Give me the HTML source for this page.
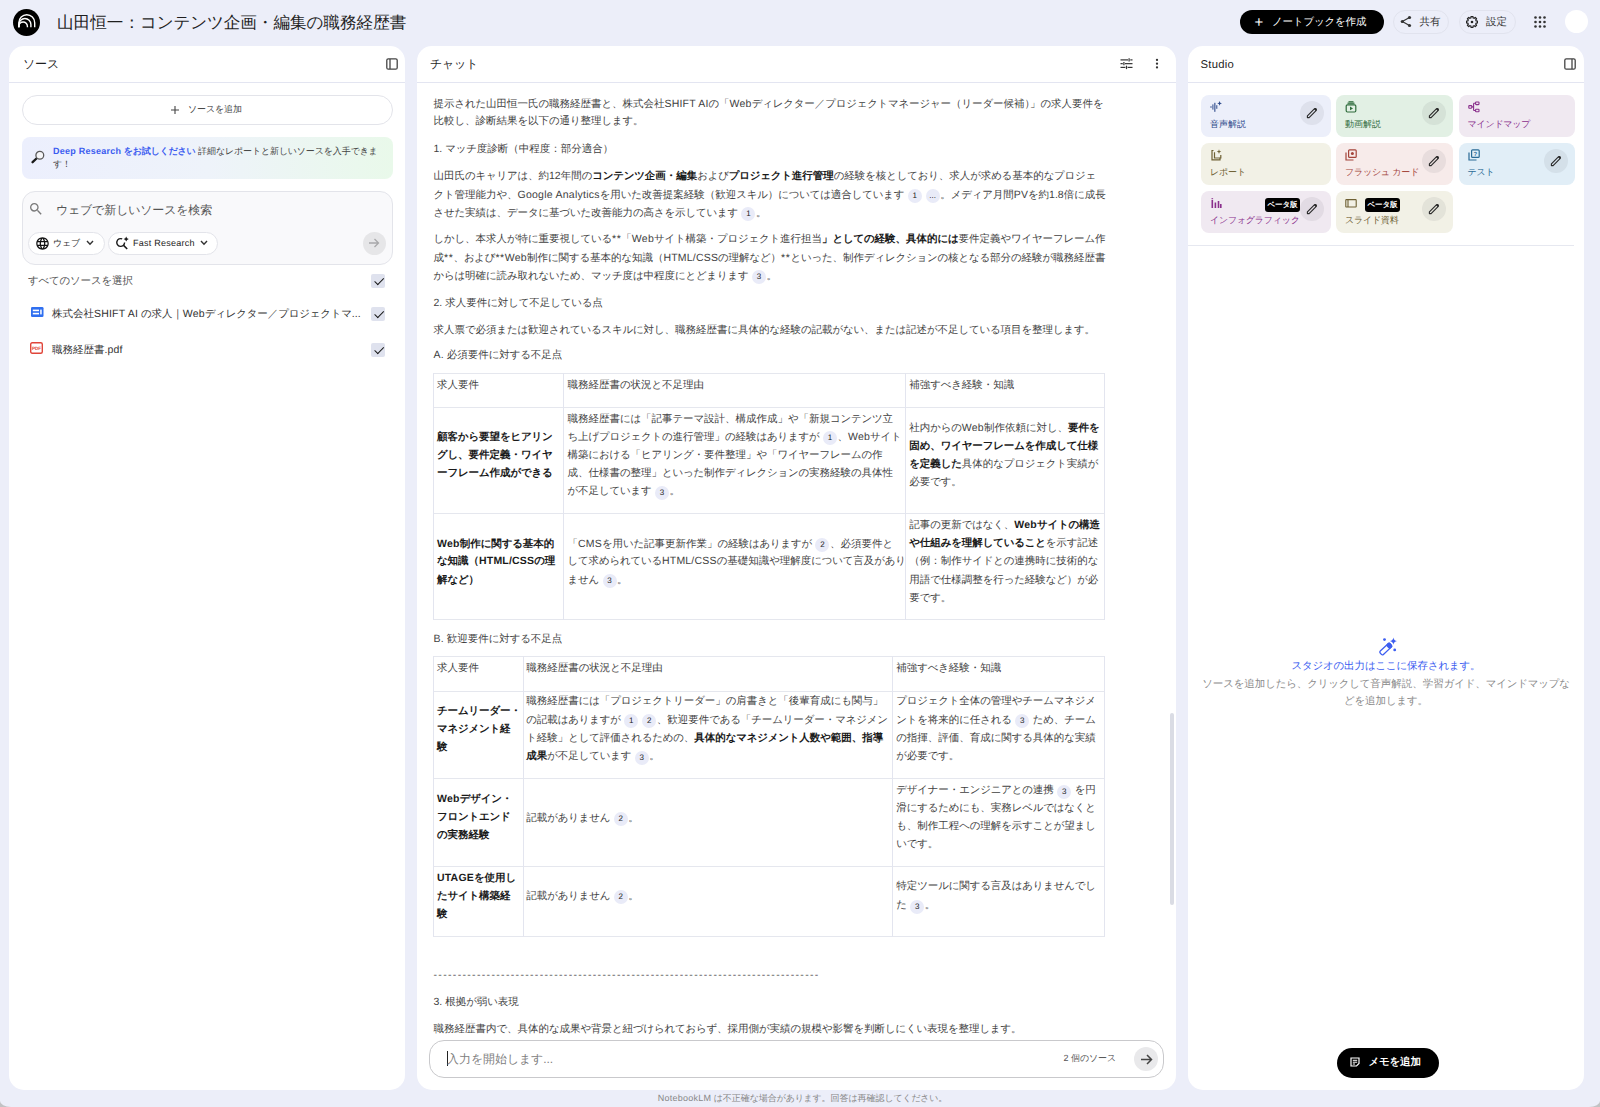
<!DOCTYPE html>
<html lang="ja">
<head>
<meta charset="utf-8">
<style>
*{box-sizing:border-box;margin:0;padding:0}
html,body{width:1600px;height:1107px;overflow:hidden}
body{text-rendering:geometricPrecision;background:#c2c2c4;font-family:"Liberation Sans",sans-serif;color:#3a3a3a;position:relative;font-size:10.5px}
.abs{position:absolute}
.panel{position:absolute;top:46px;height:1044px;background:#fff;border-radius:15px;overflow:hidden}
.ph{position:absolute;left:0;right:0;top:0;height:37px;border-bottom:1px solid #e3e5f1}
.ptitle{position:absolute;top:56px;font-size:12px;line-height:16px;color:#1f1f1f}
.ln{position:absolute;white-space:nowrap;line-height:18px;height:18px;font-size:10.5px;color:#3f3f3f}
b{font-weight:bold;color:#1a1a1a}
.c{display:inline-block;width:14px;height:14px;border-radius:7px;background:#e9ebf8;color:#222;font-size:8px;line-height:14px;text-align:center;vertical-align:-0.5px;margin:0 0.5px 0 3.5px;font-weight:normal}
.chk{width:14px;height:13.5px;border-radius:2px;background:#dfe2ee}
.chk::after{content:"";position:absolute;left:2.6px;top:2.2px;width:8.4px;height:4.2px;border-left:1.8px solid #1a1a1a;border-bottom:1.8px solid #1a1a1a;transform:rotate(-45deg) translate(-0.6px,1.6px)}
.tile{position:absolute;height:42px;border-radius:8px}
.ticon{position:absolute;left:9px;top:6px;width:12px;height:12px}
.ticon svg{display:block}
.tlabel{position:absolute;left:9px;top:23px;font-size:9px;line-height:13px;white-space:nowrap}
.pen{position:absolute;right:6.5px;top:5.5px;width:24px;height:24px;border-radius:50%;background:rgba(40,40,60,0.07)}
.pen svg{position:absolute;left:6px;top:6px}
.beta{position:absolute;top:6.5px;height:14px;width:35px;border-radius:3px;background:#000;color:#fff;font-size:7.5px;line-height:14px;text-align:center;font-weight:bold}
.tbl{position:absolute;border:1px solid #dfe2ec}
.hl{position:absolute;height:1px;background:#e5e7ee}
.vl{position:absolute;width:1px;background:#e3e5ef}
i.k{font-style:normal;letter-spacing:var(--ks,-0.25px)}
i.l{font-style:normal;letter-spacing:var(--ls,0.25px)}
i.u{font-style:normal;letter-spacing:var(--us,0.2px)}
i.a{font-style:normal;letter-spacing:0.6px}
i.h{font-style:normal;letter-spacing:-5px}
</style>
</head>
<body>
<div class="abs" style="left:0;top:0;width:1600px;height:1107px;background:#eceef9;border-radius:0 0 11px 11px / 0 0 6px 6px"></div>
<!-- top bar -->
<svg class="abs" style="left:13px;top:8.5px" width="27" height="27" viewBox="0 0 27 27">
<circle cx="13.5" cy="13.5" r="13.5" fill="#000"/>
<g fill="none" stroke="#fff" stroke-width="1.4">
<path d="M5.9 18.3 V13.7 A7.9 7.9 0 0 1 21.7 13.7 V18.3"/>
<path d="M5.9 18.3 V15.5 A6 6 0 0 1 17.9 15.5 V18.3"/>
<path d="M5.9 18.3 V17.2 A4.25 4.25 0 0 1 14.4 17.2 V18.3"/>
</g>
</svg>
<div class="abs" style="left:57px;top:11.5px;font-size:16.6px;line-height:21px;color:#1f1f1f;white-space:nowrap">山田恒一：<i class="k">コンテンツ</i>企画・編集<i class="k">の</i>職務経歴書</div>

<div class="abs" style="left:1240px;top:9.5px;width:144px;height:24px;border-radius:12px;background:#000;color:#fff;font-size:10.5px;line-height:24px;white-space:nowrap">
<span class="abs" style="left:14.5px;top:1.5px;font-size:15px;">+</span><span class="abs" style="left:32px;top:0;font-weight:normal"><i class="k">ノ</i>ー<i class="k">トブックを</i>作成</span></div>

<div class="abs" style="left:1393px;top:9.5px;width:56px;height:24px;border-radius:12px;border:1px solid #e1e3ee;"></div>
<svg class="abs" style="left:1400px;top:15px" width="12" height="13" viewBox="0 0 12 13"><g fill="#333"><circle cx="9.5" cy="2.5" r="1.6"/><circle cx="2.3" cy="6.5" r="1.6"/><circle cx="9.5" cy="10.5" r="1.6"/></g><path d="M9.5 2.5 L2.3 6.5 L9.5 10.5" stroke="#333" stroke-width="1.2" fill="none"/></svg>
<div class="abs" style="left:1419.5px;top:14.75px;font-size:10.5px;line-height:14px;color:#333">共有</div>

<div class="abs" style="left:1459px;top:9.5px;width:57px;height:24px;border-radius:12px;border:1px solid #e1e3ee;"></div>
<svg class="abs" style="left:1466px;top:16px" width="12" height="12" viewBox="0 0 12 12"><path d="M11.52 5.08 L11.52 6.92 L10.17 7.04 L9.68 8.22 L10.56 9.26 L9.26 10.56 L8.22 9.68 L7.04 10.17 L6.92 11.52 L5.08 11.52 L4.96 10.17 L3.78 9.68 L2.74 10.56 L1.44 9.26 L2.32 8.22 L1.83 7.04 L0.48 6.92 L0.48 5.08 L1.83 4.96 L2.32 3.78 L1.44 2.74 L2.74 1.44 L3.78 2.32 L4.96 1.83 L5.08 0.48 L6.92 0.48 L7.04 1.83 L8.22 2.32 L9.26 1.44 L10.56 2.74 L9.68 3.78 L10.17 4.96Z" fill="none" stroke="#222" stroke-width="1.2" stroke-linejoin="round"/><circle cx="6" cy="6" r="1.3" fill="#222"/></svg>
<div class="abs" style="left:1486px;top:14.75px;font-size:10.5px;line-height:14px;color:#333">設定</div>

<svg class="abs" style="left:1534px;top:16px" width="12" height="12" viewBox="0 0 12 12"><g fill="#333"><circle cx="1.5" cy="1.5" r="1.3"/><circle cx="6" cy="1.5" r="1.3"/><circle cx="10.5" cy="1.5" r="1.3"/><circle cx="1.5" cy="6" r="1.3"/><circle cx="6" cy="6" r="1.3"/><circle cx="10.5" cy="6" r="1.3"/><circle cx="1.5" cy="10.5" r="1.3"/><circle cx="6" cy="10.5" r="1.3"/><circle cx="10.5" cy="10.5" r="1.3"/></g></svg>
<div class="abs" style="left:1565px;top:10px;width:23px;height:23px;border-radius:50%;background:#fff"></div>

<!-- LEFT PANEL -->
<div class="panel" style="left:9px;width:396px">
  <div class="ph"></div>
</div>
<div class="ptitle" style="left:23px"><i class="k">ソ</i>ー<i class="k">ス</i></div>
<svg class="abs" style="left:386px;top:58px" width="12" height="12" viewBox="0 0 12 12"><rect x="0.8" y="0.8" width="10.4" height="10.4" rx="1.5" fill="none" stroke="#444" stroke-width="1.3"/><line x1="4" y1="1" x2="4" y2="11" stroke="#444" stroke-width="1.3"/></svg>
<div class="abs" style="left:22px;top:95px;width:371px;height:29.5px;border:1px solid #e3e4ea;border-radius:15px"></div>
<svg class="abs" style="left:170.5px;top:105.5px" width="8" height="8" viewBox="0 0 8 8"><path d="M4 0 V8 M0 4 H8" stroke="#444" stroke-width="1.1"/></svg>
<div class="abs" style="left:188px;top:102px;font-size:9px;line-height:14px;color:#444"><i class="k">ソ</i>ー<i class="k">スを</i>追加</div>
<div class="abs" style="left:22px;top:137px;width:371px;height:42px;border-radius:8px;background:linear-gradient(90deg,#eceffd 0%,#eef3fa 50%,#e9f9ea 100%)"></div>
<svg class="abs" style="left:30.5px;top:149.5px" width="14" height="14" viewBox="0 0 14 14"><line x1="6" y1="8" x2="1.6" y2="12.2" stroke="#1a1a1a" stroke-width="2.3" stroke-linecap="round"/><circle cx="8.8" cy="5.2" r="3.9" fill="#f6f6f8" stroke="#5a5a5a" stroke-width="1.3"/></svg>
<div class="abs" style="left:53px;top:145px;font-size:9px;line-height:12.5px;color:#444;width:330px"><span style="color:#3b5cf0;font-weight:bold"><i class="l">Deep Research</i> <i class="k">をお</i>試<i class="k">しください</i></span> 詳細<i class="k">なレポ</i>ー<i class="k">トと</i>新<i class="k">しいソ</i>ー<i class="k">スを</i>入手<i class="k">できま</i><br><i class="k">す</i>！</div>
<div class="abs" style="left:22px;top:191.3px;width:371px;height:74px;border:1px solid #e3e4ea;border-radius:13px;background:#f9f9fb"></div>
<svg class="abs" style="left:27.5px;top:200.5px" width="16" height="16" viewBox="0 0 24 24"><path fill="#7a7a7a" d="M15.5 14h-.79l-.28-.27A6.47 6.47 0 0 0 16 9.5 6.5 6.5 0 1 0 9.5 16c1.61 0 3.09-.59 4.23-1.57l.27.28v.79l5 4.99L20.49 19l-4.99-5zm-6 0C7.01 14 5 11.99 5 9.5S7.01 5 9.5 5 14 7.01 14 9.5 11.99 14 9.5 14z"/></svg>
<div class="abs" style="left:56px;top:202px;font-size:12px;line-height:16px;color:#555"><i class="k">ウェブで</i>新<i class="k">しいソ</i>ー<i class="k">スを</i>検索</div>
<div class="abs" style="left:28px;top:232px;width:77px;height:23px;border:1px solid #e3e4ea;border-radius:12px;background:#fff"></div>
<svg class="abs" style="left:35px;top:236px" width="15" height="15" viewBox="0 0 24 24"><path fill="#111" d="M11.99 2C6.47 2 2 6.48 2 12s4.47 10 9.99 10C17.52 22 22 17.52 22 12S17.52 2 11.99 2zm6.93 6h-2.95a15.65 15.65 0 0 0-1.38-3.56A8.03 8.03 0 0 1 18.92 8zM12 4.04c.83 1.2 1.48 2.53 1.91 3.96h-3.82c.43-1.43 1.08-2.76 1.91-3.96zM4.26 14C4.1 13.36 4 12.69 4 12s.1-1.36.26-2h3.38c-.08.66-.14 1.32-.14 2s.06 1.34.14 2H4.26zm.82 2h2.95c.32 1.25.78 2.45 1.38 3.56A7.99 7.99 0 0 1 5.08 16zm2.95-8H5.08a7.99 7.99 0 0 1 4.33-3.56A15.65 15.65 0 0 0 8.03 8zM12 19.96c-.83-1.2-1.48-2.53-1.91-3.96h3.82c-.43 1.43-1.08 2.76-1.91 3.96zM14.34 14H9.66c-.09-.66-.16-1.32-.16-2s.07-1.35.16-2h4.68c.09.65.16 1.32.16 2s-.07 1.34-.16 2zm.25 5.56c.6-1.11 1.06-2.31 1.38-3.56h2.95a8.03 8.03 0 0 1-4.33 3.56zM16.36 14c.08-.66.14-1.32.14-2s-.06-1.34-.14-2h3.38c.16.64.26 1.31.26 2s-.1 1.36-.26 2h-3.38z"/></svg>
<div class="abs" style="left:53px;top:236px;font-size:9px;line-height:14px;color:#333"><i class="k">ウェブ</i></div>
<svg class="abs" style="left:86px;top:240px" width="8" height="6" viewBox="0 0 8 6"><path d="M1 1 L4 4.2 L7 1" fill="none" stroke="#333" stroke-width="1.4"/></svg>
<div class="abs" style="left:108px;top:232px;width:110px;height:23px;border:1px solid #e3e4ea;border-radius:12px;background:#fff"></div>
<svg class="abs" style="left:116px;top:235.5px" width="14" height="14" viewBox="0 0 14 14"><path d="M8.6 6.6 A3.9 3.9 0 1 1 6.2 2.9" fill="none" stroke="#1a1a1a" stroke-width="1.4"/><line x1="7.6" y1="9.4" x2="11.2" y2="13" stroke="#1a1a1a" stroke-width="1.5"/><path d="M10.2 0.6 Q10.6 2.6 12.8 3.1 Q10.6 3.6 10.2 5.6 Q9.8 3.6 7.6 3.1 Q9.8 2.6 10.2 0.6Z" fill="#1a1a1a"/></svg>
<div class="abs" style="left:133px;top:236px;font-size:9px;line-height:14px;color:#222"><i class="l">Fast Research</i></div>
<svg class="abs" style="left:200px;top:240px" width="8" height="6" viewBox="0 0 8 6"><path d="M1 1 L4 4.2 L7 1" fill="none" stroke="#333" stroke-width="1.4"/></svg>
<div class="abs" style="left:363px;top:231.5px;width:23px;height:23px;border-radius:50%;background:#e6e6e8"></div>
<svg class="abs" style="left:368px;top:237px" width="12" height="12" viewBox="0 0 12 12"><path d="M1 6 H10.5 M6.5 2 L10.5 6 L6.5 10" fill="none" stroke="#a8a8aa" stroke-width="1.3"/></svg>
<div class="abs" style="left:28px;top:273.5px;font-size:10.5px;line-height:14px;color:#555"><i class="k">すべてのソ</i>ー<i class="k">スを</i>選択</div>
<div class="chk abs" style="left:371px;top:274px"></div>
<svg class="abs" style="left:30.5px;top:306.5px" width="13" height="11" viewBox="0 0 13 11"><rect x="0" y="0" width="12.5" height="10" rx="1.3" fill="#2f6ff0"/><rect x="1.8" y="2.6" width="6.2" height="1.6" fill="#fff"/><rect x="1.8" y="5.8" width="6.2" height="1.6" fill="#fff"/><rect x="9.2" y="2.6" width="1.5" height="4.8" fill="#fff"/></svg>
<div class="abs" style="left:52px;top:307px;font-size:10.5px;line-height:14px;color:#333;white-space:nowrap">株式会社<i class="u">SHIFT AI</i> <i class="k">の</i>求人｜<i class="l">Web</i><i class="k">ディレクタ</i>ー／<i class="k">プロジェクトマ</i>...</div>
<div class="chk abs" style="left:371px;top:307px"></div>
<svg class="abs" style="left:30px;top:342px" width="13" height="12" viewBox="0 0 13 12"><rect x="0.7" y="0.7" width="11.6" height="10.6" rx="1.5" fill="none" stroke="#e0453a" stroke-width="1.4"/><text x="6.5" y="7.6" font-size="4.6" font-family="Liberation Sans" font-weight="bold" fill="#e0453a" text-anchor="middle">PDF</text></svg>
<div class="abs" style="left:52px;top:343px;font-size:10.5px;line-height:14px;color:#333;white-space:nowrap">職務経歴書.<i class="l">pdf</i></div>
<div class="chk abs" style="left:371px;top:343px"></div>

<!-- MIDDLE PANEL -->
<div class="panel" style="left:417px;width:759px">
  <div class="ph"></div>
</div>
<!--MID-->
<div class="ptitle" style="left:430px"><i class="k">チャット</i></div>
<svg class="abs" style="left:1120px;top:58px" width="13" height="12" viewBox="0 0 13 12"><g stroke="#333" stroke-width="1.2"><line x1="0.5" y1="1.9" x2="8" y2="1.9"/><line x1="10.3" y1="1.9" x2="12.5" y2="1.9"/><line x1="9.1" y1="0.2" x2="9.1" y2="3.6"/><line x1="0.5" y1="5.65" x2="2.8" y2="5.65"/><line x1="5" y1="5.65" x2="12.5" y2="5.65"/><line x1="3.9" y1="3.95" x2="3.9" y2="7.35"/><line x1="0.5" y1="9.4" x2="5.4" y2="9.4"/><line x1="7.6" y1="9.4" x2="12.5" y2="9.4"/><line x1="6.5" y1="7.7" x2="6.5" y2="11.1"/></g></svg>
<svg class="abs" style="left:1154.75px;top:58px" width="4" height="12" viewBox="0 0 4 12"><g fill="#333"><circle cx="2" cy="1.9" r="1.15"/><circle cx="2" cy="5.65" r="1.15"/><circle cx="2" cy="9.4" r="1.15"/></g></svg>
<div class="hl" style="left:433.00px;width:672.00px;top:372.50px"></div>
<div class="hl" style="left:433.00px;width:672.00px;top:407.00px"></div>
<div class="hl" style="left:433.00px;width:672.00px;top:512.50px"></div>
<div class="hl" style="left:433.00px;width:672.00px;top:619.00px"></div>
<div class="vl" style="left:433.00px;height:247.50px;top:372.50px"></div>
<div class="vl" style="left:563.00px;height:247.50px;top:372.50px"></div>
<div class="vl" style="left:905.00px;height:247.50px;top:372.50px"></div>
<div class="vl" style="left:1104.00px;height:247.50px;top:372.50px"></div>
<div class="hl" style="left:433.00px;width:672.00px;top:655.50px"></div>
<div class="hl" style="left:433.00px;width:672.00px;top:690.50px"></div>
<div class="hl" style="left:433.00px;width:672.00px;top:777.50px"></div>
<div class="hl" style="left:433.00px;width:672.00px;top:865.50px"></div>
<div class="hl" style="left:433.00px;width:672.00px;top:936.00px"></div>
<div class="vl" style="left:433.00px;height:281.50px;top:655.50px"></div>
<div class="vl" style="left:523.00px;height:281.50px;top:655.50px"></div>
<div class="vl" style="left:892.00px;height:281.50px;top:655.50px"></div>
<div class="vl" style="left:1104.00px;height:281.50px;top:655.50px"></div>
<div class="ln" style="left:433.50px;top:94.75px">提示<i class="k">された</i>山田恒一氏<i class="k">の</i>職務経歴書<i class="k">と</i>、株式会社<i class="u">SHIFT AI</i><i class="k">の</i>「<i class="l">Web</i><i class="k">ディレクタ</i>ー／<i class="k">プロジェクトマネ</i>ー<i class="k">ジャ</i>ー（<i class="k">リ</i>ー<i class="k">ダ</i>ー候補<i class="h">）</i>」<i class="k">の</i>求人要件<i class="k">を</i></div>
<div class="ln" style="left:433.50px;top:112.25px">比較<i class="k">し</i>、診断結果<i class="k">を</i>以下<i class="k">の</i>通<i class="k">り</i>整理<i class="k">します</i>。</div>
<div class="ln" style="left:433.50px;top:139.75px">1. <i class="k">マッチ</i>度診断（中程度：部分適合）</div>
<div class="ln" style="left:433.50px;top:167.25px">山田氏<i class="k">のキャリアは</i>、約12年間<i class="k">の</i><b><i class="k">コンテンツ</i>企画・編集</b><i class="k">および</i><b><i class="k">プロジェクト</i>進行管理</b><i class="k">の</i>経験<i class="k">を</i>核<i class="k">としており</i>、求人<i class="k">が</i>求<i class="k">める</i>基本的<i class="k">なプロジェ</i></div>
<div class="ln" style="left:433.50px;top:185.75px"><i class="k">クト</i>管理能力<i class="k">や</i>、<i class="l">Google Analytics</i><i class="k">を</i>用<i class="k">いた</i>改善提案経験（歓迎<i class="k">スキル</i>）<i class="k">については</i>適合<i class="k">しています</i><span class="c">1</span><span class="c">...</span>。<i class="k">メディア</i>月間<i class="u">PV</i><i class="k">を</i>約1.8倍<i class="k">に</i>成長</div>
<div class="ln" style="left:433.50px;top:203.50px"><i class="k">させた</i>実績<i class="k">は</i>、<i class="k">デ</i>ー<i class="k">タに</i>基<i class="k">づいた</i>改善能力<i class="k">の</i>高<i class="k">さを</i>示<i class="k">しています</i><span class="c">1</span>。</div>
<div class="ln" style="left:433.50px;top:230.40px"><i class="k">しかし</i>、本求人<i class="k">が</i>特<i class="k">に</i>重要視<i class="k">している</i><i class="a">**</i>「<i class="l">Web</i><i class="k">サイト</i>構築・<i class="k">プロジェクト</i>進行担当<b>」<i class="k">としての</i>経験、具体的<i class="k">には</i></b>要件定義<i class="k">やワイヤ</i>ー<i class="k">フレ</i>ー<i class="k">ム</i>作</div>
<div class="ln" style="left:433.50px;top:248.50px">成<i class="a">**</i>、<i class="k">および</i><i class="a">**</i><i class="l">Web</i>制作<i class="k">に</i>関<i class="k">する</i>基本的<i class="k">な</i>知識（<i class="u">HTML/CSS</i><i class="k">の</i>理解<i class="k">など</i>）<i class="a">**</i><i class="k">といった</i>、制作<i class="k">ディレクションの</i>核<i class="k">となる</i>部分<i class="k">の</i>経験<i class="k">が</i>職務経歴書</div>
<div class="ln" style="left:433.50px;top:266.60px"><i class="k">からは</i>明確<i class="k">に</i>読<i class="k">み</i>取<i class="k">れないため</i>、<i class="k">マッチ</i>度<i class="k">は</i>中程度<i class="k">にとどまります</i><span class="c">3</span>。</div>
<div class="ln" style="left:433.50px;top:293.50px">2. 求人要件<i class="k">に</i>対<i class="k">して</i>不足<i class="k">している</i>点</div>
<div class="ln" style="left:433.50px;top:321.00px">求人票<i class="k">で</i>必須<i class="k">または</i>歓迎<i class="k">されているスキルに</i>対<i class="k">し</i>、職務経歴書<i class="k">に</i>具体的<i class="k">な</i>経験<i class="k">の</i>記載<i class="k">がない</i>、<i class="k">または</i>記述<i class="k">が</i>不足<i class="k">している</i>項目<i class="k">を</i>整理<i class="k">します</i>。</div>
<div class="ln" style="left:433.50px;top:346.00px"><i class="u">A.</i> 必須要件<i class="k">に</i>対<i class="k">する</i>不足点</div>
<div class="ln" style="left:437.00px;top:376.00px">求人要件</div>
<div class="ln" style="left:567.50px;top:376.00px">職務経歴書<i class="k">の</i>状況<i class="k">と</i>不足理由</div>
<div class="ln" style="left:909.25px;top:376.00px">補強<i class="k">すべき</i>経験・知識</div>
<div class="ln" style="left:437.00px;top:427.75px"><b>顧客<i class="k">から</i>要望<i class="k">をヒアリン</i></b></div>
<div class="ln" style="left:437.00px;top:446.00px"><b><i class="k">グし</i>、要件定義・<i class="k">ワイヤ</i></b></div>
<div class="ln" style="left:437.00px;top:464.00px"><b>ー<i class="k">フレ</i>ー<i class="k">ム</i>作成<i class="k">ができる</i></b></div>
<div class="ln" style="left:567.50px;top:409.75px">職務経歴書<i class="k">には</i>「記事<i class="k">テ</i>ー<i class="k">マ</i>設計、構成作成」<i class="k">や</i>「新規<i class="k">コンテンツ</i>立</div>
<div class="ln" style="left:567.50px;top:427.75px"><i class="k">ち</i>上<i class="k">げプロジェクトの</i>進行管理」<i class="k">の</i>経験<i class="k">はありますが</i><span class="c">1</span>、<i class="l">Web</i><i class="k">サイト</i></div>
<div class="ln" style="left:567.50px;top:446.00px">構築<i class="k">における</i>「<i class="k">ヒアリング</i>・要件整理」<i class="k">や</i>「<i class="k">ワイヤ</i>ー<i class="k">フレ</i>ー<i class="k">ムの</i>作</div>
<div class="ln" style="left:567.50px;top:464.00px">成、仕様書<i class="k">の</i>整理」<i class="k">といった</i>制作<i class="k">ディレクションの</i>実務経験<i class="k">の</i>具体性</div>
<div class="ln" style="left:567.50px;top:482.25px"><i class="k">が</i>不足<i class="k">しています</i><span class="c">3</span>。</div>
<div class="ln" style="left:909.25px;top:418.50px">社内<i class="k">からの</i><i class="l">Web</i>制作依頼<i class="k">に</i>対<i class="k">し</i>、<b>要件<i class="k">を</i></b></div>
<div class="ln" style="left:909.25px;top:436.75px"><b>固<i class="k">め</i>、<i class="k">ワイヤ</i>ー<i class="k">フレ</i>ー<i class="k">ムを</i>作成<i class="k">して</i>仕様</b></div>
<div class="ln" style="left:909.25px;top:454.75px"><b><i class="k">を</i>定義<i class="k">した</i></b>具体的<i class="k">なプロジェクト</i>実績<i class="k">が</i></div>
<div class="ln" style="left:909.25px;top:472.75px">必要<i class="k">です</i>。</div>
<div class="ln" style="left:437.00px;top:534.75px"><b><i class="l">Web</i>制作<i class="k">に</i>関<i class="k">する</i>基本的</b></div>
<div class="ln" style="left:437.00px;top:552.25px"><b><i class="k">な</i>知識（<i class="u">HTML/CSS</i><i class="k">の</i>理</b></div>
<div class="ln" style="left:437.00px;top:570.50px"><b>解<i class="k">など</i>）</b></div>
<div class="ln" style="left:567.50px;top:534.75px">「<i class="u">CMS</i><i class="k">を</i>用<i class="k">いた</i>記事更新作業」<i class="k">の</i>経験<i class="k">はありますが</i><span class="c">2</span>、必須要件<i class="k">と</i></div>
<div class="ln" style="left:567.50px;top:552.25px"><i class="k">して</i>求<i class="k">められている</i><i class="u">HTML/CSS</i><i class="k">の</i>基礎知識<i class="k">や</i>理解度<i class="k">について</i>言及<i class="k">があり</i></div>
<div class="ln" style="left:567.50px;top:570.50px"><i class="k">ません</i><span class="c">3</span>。</div>
<div class="ln" style="left:909.25px;top:516.00px">記事<i class="k">の</i>更新<i class="k">ではなく</i>、<b><i class="l">Web</i><i class="k">サイトの</i>構造</b></div>
<div class="ln" style="left:909.25px;top:534.25px"><b><i class="k">や</i>仕組<i class="k">みを</i>理解<i class="k">していること</i></b><i class="k">を</i>示<i class="k">す</i>記述</div>
<div class="ln" style="left:909.25px;top:552.25px">（例：制作<i class="k">サイドとの</i>連携時<i class="k">に</i>技術的<i class="k">な</i></div>
<div class="ln" style="left:909.25px;top:570.50px">用語<i class="k">で</i>仕様調整<i class="k">を</i>行<i class="k">った</i>経験<i class="k">など</i>）<i class="k">が</i>必</div>
<div class="ln" style="left:909.25px;top:588.50px">要<i class="k">です</i>。</div>
<div class="ln" style="left:433.50px;top:629.75px"><i class="u">B.</i> 歓迎要件<i class="k">に</i>対<i class="k">する</i>不足点</div>
<div class="ln" style="left:437.00px;top:659.00px">求人要件</div>
<div class="ln" style="left:526.25px;top:659.00px">職務経歴書<i class="k">の</i>状況<i class="k">と</i>不足理由</div>
<div class="ln" style="left:896.25px;top:659.00px">補強<i class="k">すべき</i>経験・知識</div>
<div class="ln" style="left:437.00px;top:701.50px"><b><i class="k">チ</i>ー<i class="k">ムリ</i>ー<i class="k">ダ</i>ー・</b></div>
<div class="ln" style="left:437.00px;top:719.75px"><b><i class="k">マネジメント</i>経</b></div>
<div class="ln" style="left:437.00px;top:737.75px"><b>験</b></div>
<div class="ln" style="left:526.25px;top:692.25px">職務経歴書<i class="k">には</i>「<i class="k">プロジェクトリ</i>ー<i class="k">ダ</i>ー」<i class="k">の</i>肩書<i class="k">きと</i>「後輩育成<i class="k">にも</i>関与」</div>
<div class="ln" style="left:526.25px;top:710.50px"><i class="k">の</i>記載<i class="k">はありますが</i><span class="c">1</span><span class="c">2</span>、歓迎要件<i class="k">である</i>「<i class="k">チ</i>ー<i class="k">ムリ</i>ー<i class="k">ダ</i>ー・<i class="k">マネジメン</i></div>
<div class="ln" style="left:526.25px;top:728.50px"><i class="k">ト</i>経験」<i class="k">として</i>評価<i class="k">されるための</i>、<b>具体的<i class="k">なマネジメント</i>人数<i class="k">や</i>範囲、指導</b></div>
<div class="ln" style="left:526.25px;top:747.25px"><b>成果</b><i class="k">が</i>不足<i class="k">しています</i><span class="c">3</span>。</div>
<div class="ln" style="left:896.25px;top:692.25px"><i class="k">プロジェクト</i>全体<i class="k">の</i>管理<i class="k">やチ</i>ー<i class="k">ムマネジメ</i></div>
<div class="ln" style="left:896.25px;top:710.50px"><i class="k">ントを</i>将来的<i class="k">に</i>任<i class="k">される</i><span class="c">3</span> <i class="k">ため</i>、<i class="k">チ</i>ー<i class="k">ム</i></div>
<div class="ln" style="left:896.25px;top:728.50px"><i class="k">の</i>指揮、評価、育成<i class="k">に</i>関<i class="k">する</i>具体的<i class="k">な</i>実績</div>
<div class="ln" style="left:896.25px;top:747.25px"><i class="k">が</i>必要<i class="k">です</i>。</div>
<div class="ln" style="left:437.00px;top:789.75px"><b><i class="l">Web</i><i class="k">デザイン</i>・</b></div>
<div class="ln" style="left:437.00px;top:808.00px"><b><i class="k">フロントエンド</i></b></div>
<div class="ln" style="left:437.00px;top:826.00px"><b><i class="k">の</i>実務経験</b></div>
<div class="ln" style="left:526.25px;top:808.50px">記載<i class="k">がありません</i><span class="c">2</span>。</div>
<div class="ln" style="left:896.25px;top:781.00px"><i class="k">デザイナ</i>ー・<i class="k">エンジニアとの</i>連携<span class="c">3</span> <i class="k">を</i>円</div>
<div class="ln" style="left:896.25px;top:799.00px">滑<i class="k">にするためにも</i>、実務<i class="k">レベルではなくと</i></div>
<div class="ln" style="left:896.25px;top:817.25px"><i class="k">も</i>、制作工程<i class="k">への</i>理解<i class="k">を</i>示<i class="k">すことが</i>望<i class="k">まし</i></div>
<div class="ln" style="left:896.25px;top:834.75px"><i class="k">いです</i>。</div>
<div class="ln" style="left:437.00px;top:868.50px"><b><i class="u">UTAGE</i><i class="k">を</i>使用<i class="k">し</i></b></div>
<div class="ln" style="left:437.00px;top:886.50px"><b><i class="k">たサイト</i>構築経</b></div>
<div class="ln" style="left:437.00px;top:904.75px"><b>験</b></div>
<div class="ln" style="left:526.25px;top:886.50px">記載<i class="k">がありません</i><span class="c">2</span>。</div>
<div class="ln" style="left:896.25px;top:877.25px">特定<i class="k">ツ</i>ー<i class="k">ルに</i>関<i class="k">する</i>言及<i class="k">はありませんでし</i></div>
<div class="ln" style="left:896.25px;top:896.00px"><i class="k">た</i><span class="c">3</span>。</div>
<div class="ln" style="left:433.50px;top:993.00px">3. 根拠<i class="k">が</i>弱<i class="k">い</i>表現</div>
<div class="ln" style="left:433.50px;top:1019.75px">職務経歴書内<i class="k">で</i>、具体的<i class="k">な</i>成果<i class="k">や</i>背景<i class="k">と</i>紐<i class="k">づけられておらず</i>、採用側<i class="k">が</i>実績<i class="k">の</i>規模<i class="k">や</i>影響<i class="k">を</i>判断<i class="k">しにくい</i>表現<i class="k">を</i>整理<i class="k">します</i>。</div>
<div class="ln" style="left:433.5px;top:966px;color:#555;letter-spacing:1.33px">--------------------------------------------------------------------------------</div>
<div class="abs" style="left:429px;top:1040px;width:735px;height:37.5px;border:1px solid #c9c9cc;border-radius:15px;background:#fff"></div>
<div class="abs" style="left:447px;top:1051px;width:1px;height:15px;background:#222"></div>
<div class="abs" style="left:447px;top:1051px;font-size:12px;line-height:16px;color:#808080">入力<i class="k">を</i>開始<i class="k">します</i>...</div>
<div class="abs" style="left:1063.5px;top:1051.8px;font-size:9px;line-height:13px;color:#555">2 個<i class="k">のソ</i>ー<i class="k">ス</i></div>
<div class="abs" style="left:1134px;top:1047px;width:24px;height:24px;border-radius:50%;background:#e9e9eb"></div>
<svg class="abs" style="left:1139.5px;top:1052.5px" width="13" height="13" viewBox="0 0 13 13"><path d="M1 6.5 H11.5 M7 2 L11.5 6.5 L7 11" fill="none" stroke="#444" stroke-width="1.5"/></svg>
<div class="abs" style="left:1169.5px;top:713px;width:4.5px;height:192px;border-radius:3px;background:#dadce4"></div>
<!--/MID-->

<!-- RIGHT PANEL -->
<div class="panel" style="left:1188px;width:396px">
  <div class="ph"></div>
</div>
<div class="ptitle" style="left:1200.5px;top:57.3px;font-size:11.3px"><i class="l">Studio</i></div>
<svg class="abs" style="left:1564px;top:58px" width="12" height="12" viewBox="0 0 12 12"><rect x="0.8" y="0.8" width="10.4" height="10.4" rx="1.5" fill="none" stroke="#444" stroke-width="1.3"/><line x1="8" y1="1" x2="8" y2="11" stroke="#444" stroke-width="1.3"/></svg>
<div class="tile" style="left:1201.00px;top:95.00px;width:129.50px;background:#eceffa;color:#2d4a8a"><div class="ticon"><svg width="12" height="12" viewBox="0 0 12 12"><g fill="#2d4a8a"><rect x="0.5" y="5.2" width="1" height="1.6"/><rect x="2.4" y="3.4" width="1" height="5.2"/><rect x="4.3" y="1.8" width="1.1" height="9"/><rect x="6.3" y="4.2" width="1" height="3.6"/><path d="M9.6 0 L10.3 1.7 L12 2.4 L10.3 3.1 L9.6 4.8 L8.9 3.1 L7.2 2.4 L8.9 1.7Z"/></g></svg></div><div class="tlabel">音声解説</div><div class="pen"><svg width="12" height="12" viewBox="0 0 12 12"><path d="M1.4 8.9 L8.6 1.7 L10.3 3.4 L3.1 10.6 L1.4 10.6 Z" fill="none" stroke="#2a2a2a" stroke-width="1.15" stroke-linejoin="round"/><path d="M8.1 2.2 L9.2 1.1 Q9.6 0.7 10 1.1 L10.9 2 Q11.3 2.4 10.9 2.8 L9.8 3.9 Z" fill="#2a2a2a"/></svg></div></div>
<div class="tile" style="left:1336.00px;top:95.00px;width:116.50px;background:#e2f0e4;color:#2e6b3b"><div class="ticon"><svg width="12" height="12" viewBox="0 0 12 12"><g fill="none" stroke="#2e6b3b" stroke-width="1.2"><rect x="1.2" y="3.8" width="9.6" height="7.2" rx="1.2"/><line x1="2.5" y1="2.2" x2="9.5" y2="2.2"/><line x1="3.5" y1="0.8" x2="8.5" y2="0.8"/></g><path d="M5 5.6 L8 7.4 L5 9.2Z" fill="#2e6b3b"/></svg></div><div class="tlabel">動画解説</div><div class="pen"><svg width="12" height="12" viewBox="0 0 12 12"><path d="M1.4 8.9 L8.6 1.7 L10.3 3.4 L3.1 10.6 L1.4 10.6 Z" fill="none" stroke="#2a2a2a" stroke-width="1.15" stroke-linejoin="round"/><path d="M8.1 2.2 L9.2 1.1 Q9.6 0.7 10 1.1 L10.9 2 Q11.3 2.4 10.9 2.8 L9.8 3.9 Z" fill="#2a2a2a"/></svg></div></div>
<div class="tile" style="left:1458.50px;top:95.00px;width:116.00px;background:#f0e9f1;color:#8a2f8c"><div class="ticon"><svg width="12" height="12" viewBox="0 0 12 12"><g fill="none" stroke="#8a2f8c" stroke-width="1.1"><rect x="0.8" y="4.6" width="3" height="2.6" rx="0.6"/><rect x="7.6" y="1" width="3.4" height="2.6" rx="0.6"/><rect x="7.6" y="8.2" width="3.4" height="2.6" rx="0.6"/><path d="M3.8 5.9 H5.6 M5.6 2.3 V9.5 M5.6 2.3 H7.6 M5.6 9.5 H7.6"/></g></svg></div><div class="tlabel"><i class="k">マインドマップ</i></div></div>
<div class="tile" style="left:1201.00px;top:143.00px;width:129.50px;background:#f2f1e6;color:#6e6033"><div class="ticon"><svg width="12" height="12" viewBox="0 0 12 12"><g fill="none" stroke="#6e6033" stroke-width="1.2"><path d="M3.5 1.5 H2 V10.8 H10 V8.8"/><path d="M4.5 3.2 V9 H10.8 V6"/></g><path d="M9 0.3 L9.6 2 L11.3 2.6 L9.6 3.2 L9 4.9 L8.4 3.2 L6.7 2.6 L8.4 2Z" fill="#6e6033"/></svg></div><div class="tlabel"><i class="k">レポ</i>ー<i class="k">ト</i></div></div>
<div class="tile" style="left:1336.00px;top:143.00px;width:116.50px;background:#f7ebea;color:#a4443a"><div class="ticon"><svg width="12" height="12" viewBox="0 0 12 12"><g fill="none" stroke="#a4443a" stroke-width="1.2"><rect x="3.6" y="0.8" width="7.6" height="7.6" rx="1"/><path d="M1 3.5 V11 H8.5"/></g><circle cx="7.4" cy="4.6" r="1.5" fill="#a4443a"/></svg></div><div class="tlabel"><i class="k">フラッシュ</i> <i class="k">カ</i>ー<i class="k">ド</i></div><div class="pen"><svg width="12" height="12" viewBox="0 0 12 12"><path d="M1.4 8.9 L8.6 1.7 L10.3 3.4 L3.1 10.6 L1.4 10.6 Z" fill="none" stroke="#2a2a2a" stroke-width="1.15" stroke-linejoin="round"/><path d="M8.1 2.2 L9.2 1.1 Q9.6 0.7 10 1.1 L10.9 2 Q11.3 2.4 10.9 2.8 L9.8 3.9 Z" fill="#2a2a2a"/></svg></div></div>
<div class="tile" style="left:1458.50px;top:143.00px;width:116.00px;background:#e1eef7;color:#2a6a95"><div class="ticon"><svg width="12" height="12" viewBox="0 0 12 12"><g fill="none" stroke="#2a6a95" stroke-width="1.2"><rect x="3.6" y="0.8" width="7.6" height="7.6" rx="1"/><path d="M1 3.5 V11 H8.5"/></g><text x="7.4" y="7" font-size="6" font-family="Liberation Sans" font-weight="bold" text-anchor="middle" fill="#2a6a95">?</text></svg></div><div class="tlabel"><i class="k">テスト</i></div><div class="pen"><svg width="12" height="12" viewBox="0 0 12 12"><path d="M1.4 8.9 L8.6 1.7 L10.3 3.4 L3.1 10.6 L1.4 10.6 Z" fill="none" stroke="#2a2a2a" stroke-width="1.15" stroke-linejoin="round"/><path d="M8.1 2.2 L9.2 1.1 Q9.6 0.7 10 1.1 L10.9 2 Q11.3 2.4 10.9 2.8 L9.8 3.9 Z" fill="#2a2a2a"/></svg></div></div>
<div class="tile" style="left:1201.00px;top:191.00px;width:129.50px;background:#f0e9f1;color:#8a2f8c"><div class="ticon"><svg width="12" height="12" viewBox="0 0 12 12"><g fill="#8a2f8c"><rect x="1.5" y="3" width="1.6" height="8"/><rect x="1.5" y="1.2" width="1.6" height="1"/><rect x="4.6" y="5.5" width="1.6" height="5.5"/><rect x="7.7" y="4" width="1.6" height="7"/><rect x="10" y="7" width="1.6" height="4"/></g></svg></div><div class="tlabel"><i class="k">インフォグラフィック</i></div><div class="beta" style="left:64.00px"><i class="k">ベ</i>ー<i class="k">タ</i>版</div><div class="pen"><svg width="12" height="12" viewBox="0 0 12 12"><path d="M1.4 8.9 L8.6 1.7 L10.3 3.4 L3.1 10.6 L1.4 10.6 Z" fill="none" stroke="#2a2a2a" stroke-width="1.15" stroke-linejoin="round"/><path d="M8.1 2.2 L9.2 1.1 Q9.6 0.7 10 1.1 L10.9 2 Q11.3 2.4 10.9 2.8 L9.8 3.9 Z" fill="#2a2a2a"/></svg></div></div>
<div class="tile" style="left:1336.00px;top:191.00px;width:116.50px;background:#f2f1e6;color:#6e6033"><div class="ticon"><svg width="12" height="12" viewBox="0 0 12 12"><g fill="none" stroke="#6e6033" stroke-width="1.1"><rect x="0.8" y="2.6" width="10.4" height="7.4" rx="0.6"/><line x1="3" y1="2.6" x2="3" y2="10"/></g></svg></div><div class="tlabel"><i class="k">スライド</i>資料</div><div class="beta" style="left:29.00px"><i class="k">ベ</i>ー<i class="k">タ</i>版</div><div class="pen"><svg width="12" height="12" viewBox="0 0 12 12"><path d="M1.4 8.9 L8.6 1.7 L10.3 3.4 L3.1 10.6 L1.4 10.6 Z" fill="none" stroke="#2a2a2a" stroke-width="1.15" stroke-linejoin="round"/><path d="M8.1 2.2 L9.2 1.1 Q9.6 0.7 10 1.1 L10.9 2 Q11.3 2.4 10.9 2.8 L9.8 3.9 Z" fill="#2a2a2a"/></svg></div></div>
<div class="hl" style="left:1188px;width:386px;top:245px;background:#e6e8f0"></div>
<svg class="abs" style="left:1376px;top:634px" width="24" height="24" viewBox="0 0 24 24"><g transform="translate(9.75 15.1) rotate(-43)"><rect x="-6.75" y="-2.3" width="13.5" height="4.6" rx="1.4" fill="none" stroke="#3d5ef0" stroke-width="1.3"/><rect x="2.6" y="-2.95" width="4.8" height="5.9" rx="2" fill="#3d5ef0"/></g><path d="M17.4 3.5 Q17.9 6.6 21 7.1 Q17.9 7.6 17.4 10.7 Q16.9 7.6 13.8 7.1 Q16.9 6.6 17.4 3.5Z" fill="#3d5ef0"/><circle cx="8.5" cy="5.6" r="1.4" fill="#3d5ef0"/><circle cx="18.7" cy="15.9" r="1.4" fill="#3d5ef0"/></svg>
<div class="abs" style="left:1188px;width:396px;top:658px;text-align:center;font-size:10.5px;line-height:17.5px;color:#3b5cf0"><i class="k">スタジオの</i>出力<i class="k">はここに</i>保存<i class="k">されます</i>。</div>
<div class="abs" style="left:1188px;width:396px;top:675.5px;text-align:center;font-size:10.5px;line-height:17.5px;color:#8a8a8a"><i class="k">ソ</i>ー<i class="k">スを</i>追加<i class="k">したら</i>、<i class="k">クリックして</i>音声解説、学習<i class="k">ガイド</i>、<i class="k">マインドマップな</i><br><i class="k">どを</i>追加<i class="k">します</i>。</div>
<div class="abs" style="left:1336.5px;top:1047.5px;width:102px;height:30px;border-radius:15px;background:#000"></div>
<svg class="abs" style="left:1350px;top:1057px" width="10" height="10" viewBox="0 0 10 10"><path d="M1 1 H9 V6.5 L6.5 9 H1 Z" fill="none" stroke="#fff" stroke-width="1.2"/><path d="M2.8 3.3 H7.2 M2.8 5.2 H7.2 M2.8 7 H5" stroke="#fff" stroke-width="1"/></svg>
<div class="abs" style="left:1368.5px;top:1055px;font-size:10.5px;line-height:15px;color:#fff;font-weight:bold"><i class="k">メモを</i>追加</div>


<div class="abs" style="left:0;width:1600px;top:1091.5px;text-align:center;font-size:9px;line-height:13px;color:#888;padding-left:5px"><i class="l">NotebookLM</i> <i class="k">は</i>不正確<i class="k">な</i>場合<i class="k">があります</i>。回答<i class="k">は</i>再確認<i class="k">してください</i>。</div>
</body>
</html>
